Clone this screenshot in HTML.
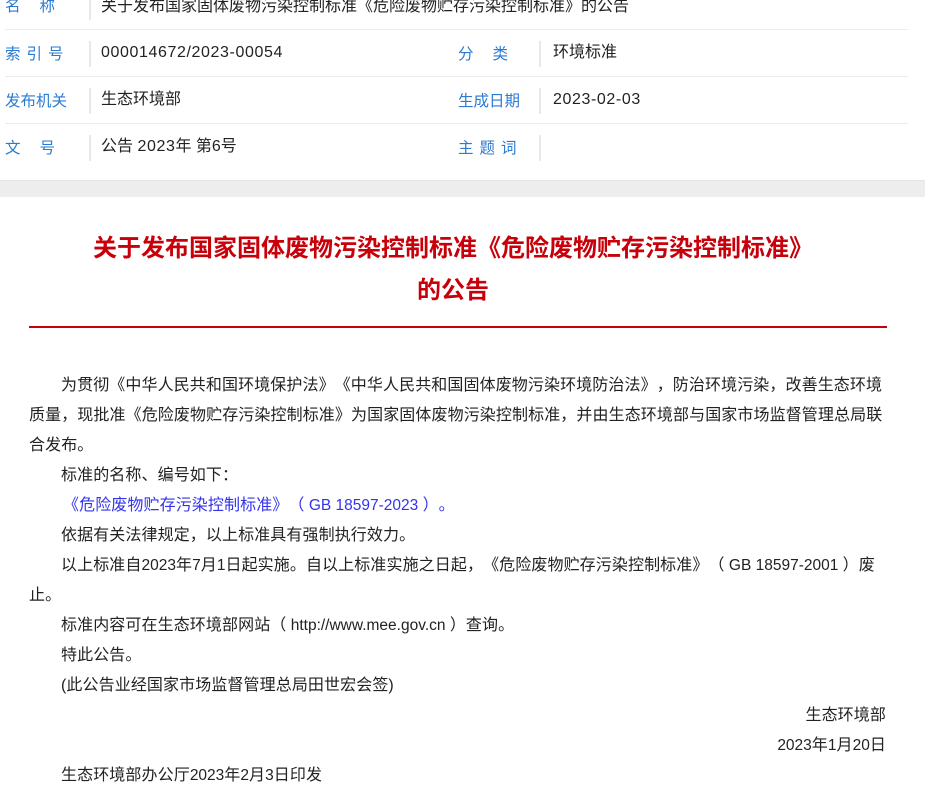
<!DOCTYPE html>
<html><head><meta charset="utf-8">
<style>
*{margin:0;padding:0;box-sizing:border-box}
body{width:925px;height:795px;overflow:hidden;background:#fff;font-family:"Liberation Sans","Noto Sans CJK SC",sans-serif;color:#222;position:relative;text-spacing-trim:space-all}
.a{position:absolute;white-space:nowrap;line-height:20px}
.lb{color:#2a7ad2;font-size:15.5px}
.v{font-size:16px;color:#222}
.n{letter-spacing:0.6px}
.hr{position:absolute;left:5px;width:903px;height:1px;background:#ececec}
.vs{position:absolute;width:2px;height:26px;background:#e8e8e8}
.band{position:absolute;left:0;top:180px;width:925px;height:17px;background:#ededed;border-top:1px solid #e4e4e4}
.t{position:absolute;left:0;width:906px;text-align:center;color:#c8000a;font-weight:bold;font-size:24px;line-height:30px}
.b{position:absolute;font-size:16px;letter-spacing:0.1px;line-height:20px;white-space:nowrap;color:#222}
.l{letter-spacing:0;font-size:15.5px}
</style></head><body>
<div class="a lb" style="left:5px;top:-3px;letter-spacing:19px">名称</div>
<div class="vs" style="left:89px;top:-6px"></div>
<div class="a v" style="left:101px;top:-3px">关于发布国家固体废物污染控制标准《危险废物贮存污染控制标准》的公告</div>
<div class="hr" style="top:29px"></div>

<div class="a lb" style="left:5px;top:45px;letter-spacing:6px">索引号</div>
<div class="vs" style="left:89px;top:41px"></div>
<div class="a v n" style="left:101px;top:43px">000014672/2023-00054</div>
<div class="a lb" style="left:458px;top:45px;letter-spacing:19px">分类</div>
<div class="vs" style="left:539px;top:41px"></div>
<div class="a v" style="left:553px;top:43px">环境标准</div>
<div class="hr" style="top:76px"></div>

<div class="a lb" style="left:5px;top:92px">发布机关</div>
<div class="vs" style="left:89px;top:88px"></div>
<div class="a v" style="left:101px;top:90px">生态环境部</div>
<div class="a lb" style="left:458px;top:92px">生成日期</div>
<div class="vs" style="left:539px;top:88px"></div>
<div class="a v n" style="left:553px;top:90px">2023-02-03</div>
<div class="hr" style="top:123px"></div>

<div class="a lb" style="left:5px;top:139px;letter-spacing:19px">文号</div>
<div class="vs" style="left:89px;top:135px"></div>
<div class="a v" style="left:101px;top:137px">公告 <span class="n">2023</span>年 第6号</div>
<div class="a lb" style="left:458px;top:139px;letter-spacing:6px">主题词</div>
<div class="vs" style="left:539px;top:135px"></div>

<div class="band"></div>

<div class="t" style="top:234px">关于发布国家固体废物污染控制标准《危险废物贮存污染控制标准》</div>
<div class="t" style="top:276px">的公告</div>
<div style="position:absolute;left:29px;top:326px;width:858px;height:2px;background:#c8000a"></div>

<div class="b" style="left:61px;top:376px">为贯彻《中华人民共和国环境保护法》《中华人民共和国固体废物污染环境防治法》，防治环境污染，改善生态环境</div>
<div class="b" style="left:29px;top:406px">质量，现批准《危险废物贮存污染控制标准》为国家固体废物污染控制标准，并由生态环境部与国家市场监督管理总局联</div>
<div class="b" style="left:29px;top:436px">合发布。</div>
<div class="b" style="left:61px;top:466px">标准的名称、编号如下：</div>
<div class="b" style="left:63px;top:496px;color:#3333ee">《危险废物贮存污染控制标准》（<span class="l"> GB 18597-2023 </span>）。</div>
<div class="b" style="left:61px;top:526px">依据有关法律规定，以上标准具有强制执行效力。</div>
<div class="b" style="left:61px;top:556px">以上标准自<span class="l">2023</span>年<span class="l">7</span>月<span class="l">1</span>日起实施。自以上标准实施之日起，《危险废物贮存污染控制标准》（<span class="l"> GB 18597-2001 </span>）废</div>
<div class="b" style="left:29px;top:586px">止。</div>
<div class="b" style="left:61px;top:616px">标准内容可在生态环境部网站（<span class="l"> http://www.mee.gov.cn </span>）查询。</div>
<div class="b" style="left:61px;top:646px">特此公告。</div>
<div class="b" style="left:61px;top:676px">(此公告业经国家市场监督管理总局田世宏会签)</div>
<div class="b" style="right:39px;top:706px">生态环境部</div>
<div class="b" style="right:39px;top:736px"><span class="l">2023</span>年<span class="l">1</span>月<span class="l">20</span>日</div>
<div class="b" style="left:61px;top:766px">生态环境部办公厅<span class="l">2023</span>年<span class="l">2</span>月<span class="l">3</span>日印发</div>
</body></html>
